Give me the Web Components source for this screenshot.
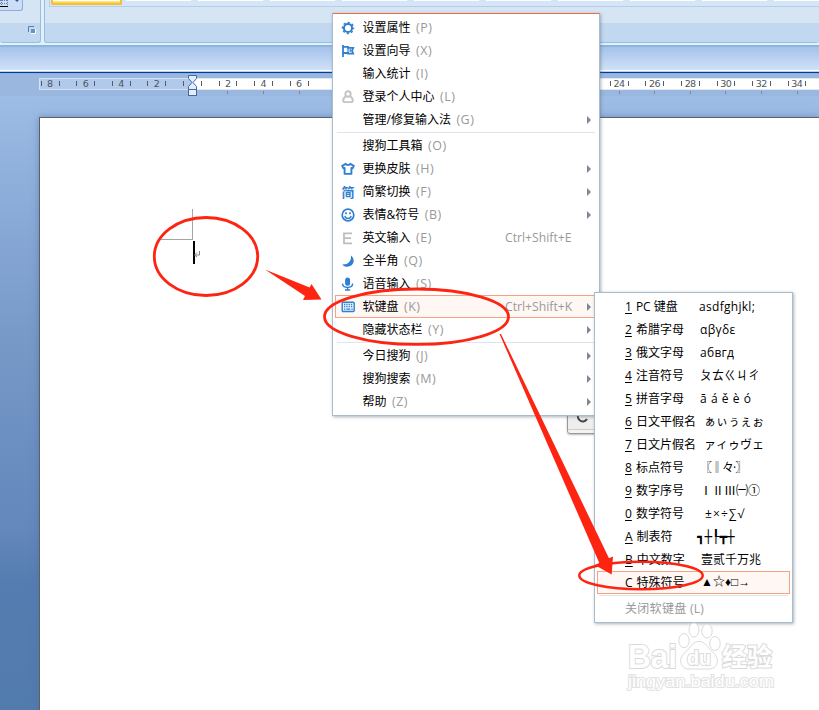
<!DOCTYPE html>
<html lang="zh-CN">
<head>
<meta charset="utf-8">
<title>文档</title>
<style>
html, body { margin: 0; height: 100%; }
body {
    position: relative;
    width: 819px;
    height: 710px;
    overflow: hidden;
    font: 12px/23px "Open Sans", "Noto Sans CJK SC", sans-serif;
    color: #000;
}
word-window { width: 819px; height: 710px; }
ime-bar { position: absolute; left: 567px; top: 396px; }
#main { position: absolute; left: 332px; top: 13px; }
#keys { position: absolute; left: 594px; top: 292px; }
site-mark { position: absolute; left: 624px; top: 620px; }
mark-layer { position: absolute; left: 0; top: 0; }

/* samples that come from other fonts than the labels */
.wide { --sample-spacing: .3px; }
.pinyin { --sample-spacing: .55px; }
.marks { --sample-spacing: -1px; }
.maths { --sample-spacing: 1.1px; }
.boxes { --sample-font: 12.5px/21px "DejaVu Sans Mono", monospace; }
.shapes { --sample-font: 12px/21px "Liberation Sans", "Noto Sans CJK SC", sans-serif; }
</style>
</head>
<body>
<word-window>
    <word-ribbon></word-ribbon>
    <word-ruler></word-ruler>
    <word-page></word-page>
</word-window>

<ime-bar></ime-bar>

<popup-menu id="main" class="top">
    <menu-item icon="gear" hotkey="(P)">设置属性</menu-item>
    <menu-item icon="flag" hotkey="(X)">设置向导</menu-item>
    <menu-item hotkey="(I)">输入统计</menu-item>
    <menu-item icon="user" hotkey="(L)">登录个人中心</menu-item>
    <menu-item hotkey="(G)" more>管理/修复输入法</menu-item>
    <menu-line></menu-line>
    <menu-item hotkey="(O)">搜狗工具箱</menu-item>
    <menu-item icon="shirt" hotkey="(H)" more>更换皮肤</menu-item>
    <menu-item icon="jian" hotkey="(F)" more>简繁切换</menu-item>
    <menu-item icon="smile" hotkey="(B)" more>表情&amp;符号</menu-item>
    <menu-item icon="latin" hotkey="(E)" accel="Ctrl+Shift+E">英文输入</menu-item>
    <menu-item icon="moon" hotkey="(Q)">全半角</menu-item>
    <menu-item icon="mic" hotkey="(S)">语音输入</menu-item>
    <menu-item icon="keyboard" hotkey="(K)" accel="Ctrl+Shift+K" more class="active">软键盘</menu-item>
    <menu-item hotkey="(Y)" more>隐藏状态栏</menu-item>
    <menu-line></menu-line>
    <menu-item hotkey="(J)" more>今日搜狗</menu-item>
    <menu-item hotkey="(M)" more>搜狗搜索</menu-item>
    <menu-item hotkey="(Z)" more>帮助</menu-item>
</popup-menu>

<popup-menu id="keys">
    <key-item key="1" sample="asdfghjkl;" start="102" class="wide">PC 键盘</key-item>
    <key-item key="2" sample="αβγδε" start="103" class="wide">希腊字母</key-item>
    <key-item key="3" sample="абвгд" start="103" class="wide">俄文字母</key-item>
    <key-item key="4" sample="ㄆㄊㄍㄐㄔ" start="103">注音符号</key-item>
    <key-item key="5" sample="ā á ě è ó" start="103" class="pinyin">拼音字母</key-item>
    <key-item key="6" sample="ぁぃぅぇぉ" start="107">日文平假名</key-item>
    <key-item key="7" sample="ァィゥヴェ" start="107">日文片假名</key-item>
    <key-item key="8" sample="〖‖々·〗" start="103" class="marks">标点符号</key-item>
    <key-item key="9" sample="ⅠⅡⅢ㈠①" start="103">数字序号</key-item>
    <key-item key="0" sample="±×÷∑√" start="108" class="maths">数学符号</key-item>
    <key-item key="A" sample="┓┼┞┳┼" start="100" class="boxes">制表符</key-item>
    <key-item key="B" sample="壹贰千万兆" start="104">中文数字</key-item>
    <key-item key="C" sample="▲☆♦□→" start="104" class="active shapes">特殊符号</key-item>
    <menu-line></menu-line>
    <key-item class="off wide">关闭软键盘 (L)</key-item>
</popup-menu>

<site-mark></site-mark>
<mark-layer></mark-layer>

<script>
const ICONS = {
    gear: `<circle cx="7" cy="7" r="4.1" fill="none" stroke="#2f80d0" stroke-width="2"/>
        <circle cx="7" cy="7" r="5.5" fill="none" stroke="#2f80d0" stroke-width="1.5" stroke-dasharray="2.2 2.12" stroke-dashoffset="1.1"/>`,
    flag: `<path d="M2 1v12" stroke="#2f80d0" stroke-width="1.8"/>
        <path d="M2 2.8h5v1h5.2L11 6.800l1.200 2.900H7V9H2" fill="none" stroke="#2f80d0" stroke-width="1.8"/><path d="M7 4v5M9.2 5v3" stroke="#2f80d0" stroke-width="1.2"/>`,
    user: `<circle cx="7" cy="4" r="2.7" fill="none" stroke="#c4c4c4" stroke-width="1.9"/>
        <path d="M4.6 6.6C2.6 7.6 2.200 9 2.200 10.400c0 1.300 1 1.700 2 1.700h5.600c1 0 2-.4 2-1.700 0-1.400-.4-2.800-2.400-3.800" fill="none" stroke="#c4c4c4" stroke-width="1.9"/>`,
    shirt: `<path d="M4.8 1.8C5.5 3.3 8.5 3.3 9.2 1.8l3.600 2-1.200 2.500-1.200-.4v6H3.600V5.900l-1.200.4L1.200 3.800z" fill="none" stroke="#2f80d0" stroke-width="1.9" stroke-linejoin="round"/>`,
    smile: `<circle cx="7" cy="7" r="5.8" fill="none" stroke="#2f80d0" stroke-width="1.7"/>
        <path d="M5 4.2v2M9 4.2v2" stroke="#2f80d0" stroke-width="1.7"/><path d="M3.8 8c.9 3.2 5.5 3.2 6.4 0" fill="none" stroke="#2f80d0" stroke-width="1.4"/>`,
    latin: `<path d="M11 2.3H3v10h8M3 7.2h7" fill="none" stroke="#bdbdbd" stroke-width="1.8"/>`,
    moon: `<path d="M10 1.5c4 3.3 3.4 8.6-.8 10.6-3 1.3-6.3.5-8-1.7C6.3 10.8 10.5 8 10 1.5z" fill="#2f80d0"/>`,
    mic: `<rect x="4.1" y=".5" width="5" height="8.3" rx="2.5" fill="#2f80d0"/>
        <path d="M1.5 6.5c.3 5.3 9.9 5.3 10.2 0M6.6 10.500v2.300M4 13h5.200" fill="none" stroke="#2f80d0" stroke-width="1.4"/>`,
    keyboard: `<rect x="1.2" y="2.2" width="12" height="9.3" rx="1" fill="#e8f2fc" stroke="#2f80d0" stroke-width="1.4"/>
        <path d="M3 4.5h9M3 6.7h9" stroke="#2f80d0" stroke-width="1.3" stroke-dasharray="1.3 1"/><path d="M3 9.2h1.3M5.3 9.2h4M10.4 9.2h1.3" stroke="#2f80d0" stroke-width="1.3"/>`
};

customElements.define('word-window', class extends HTMLElement {
    constructor() {
        super();
        this.attachShadow({mode: 'open'}).innerHTML = `<style>
            :host {
                display: flex; flex-direction: column;
                background: linear-gradient(#9ab8df 96px, #9dbde6 96px, #8cacd9 200px, #7598c7 350px, #6487bc 530px, #567db1 580px, #527bad);
            }
        </style><slot></slot>`;
    }
});

// Lower edge of the ribbon: the font group, the style gallery and the strip below them
customElements.define('word-ribbon', class extends HTMLElement {
    constructor() {
        super();
        this.attachShadow({mode: 'open'}).innerHTML = `<style>
            :host { display: block; overflow: hidden; }
            .groups { display: flex; gap: 3px; height: 43px; background: #dff0fc; }
            .group {
                box-sizing: border-box; height: 43px; border: solid #9bbbe0; border-width: 0 1px 1px;
                border-radius: 0 0 3px 3px; background: linear-gradient(#d6e5f3 23px, #c1d8f0 23px);
            }
            .font { display: flex; flex: none; justify-content: space-between; width: 41px; border-left: 0; }
            .button {
                box-sizing: border-box; width: 23px; height: 11px; border: 1px solid #8eace0;
                border-width: 0 1px 1px 0; border-radius: 0 0 3px 0; background: #cbddf7;
            }
            .launcher { margin: 26px 4px 0 0; }
            svg { display: block; }
            .styles { flex: 1; min-width: 0; padding-left: 4px; border-right: 0; }
            .gallery {
                display: flex; gap: 7px; box-sizing: border-box; height: 7px; padding-left: 1px; overflow: hidden;
                border: solid #b6cdec; border-width: 0 0 1px 1px; background: #d4e6f8;
            }
            .gallery i { flex: none; width: 65px; height: 1px; background: #fff; }
            .gallery .on {
                box-sizing: border-box; width: 71px; height: 5px; margin-right: -3px;
                border: 2px solid #f5c034; border-top: 0; border-radius: 0 0 2px 2px;
                background: linear-gradient(#fff 1px, #ffe680 1px, #fdd550);
            }
            .edge { height: 4px; background: linear-gradient(#d6f6fc 2px, #8fb0d8 2px, #97b5dc); }
            .strip { height: 23px; background: linear-gradient(#a4c2ea, #d0e1f8); }
            .line { height: 4px; background: linear-gradient(#fff 1px, #b8cee9 1px 2px, #003b9c 2px 3px, #8eb0dd 3px); }
        </style>
        <div class="groups">
            <div class="group font">
                <div class="button"><svg width="22" height="10"><path d="M0 .5h8M0 3.5h8M1.5 0v6M7.5 0v6" stroke="#667fa8" stroke-dasharray="1 1"/><path d="M0 6.5h8" stroke="#000"/><path d="M15 0h4l-2 2z" fill="#375b91"/></svg></div>
                <svg class="launcher" width="8" height="9"><path d="M.5 6V.5H6" fill="none" stroke="#557eac"/><path d="M3 3h4v4H3z" fill="#6b91bd"/><path d="M3 7.500h4.500V3" stroke="#fff" fill="none"/></svg>
            </div>
            <div class="group styles"><div class="gallery"><i class="on"></i>${'<i></i>'.repeat(10)}</div></div>
        </div>
        <div class="edge"></div>
        <div class="strip"></div>
        <div class="line"></div>`;
    }
});

customElements.define('word-ruler', class extends HTMLElement {
    constructor() {
        super();
        this.attachShadow({mode: 'open'}).innerHTML = `<style>
            :host { display: block; height: 43px; }
            svg { display: block; }
            text { font: 9.5px "DejaVu Sans", sans-serif; letter-spacing: -.6px; fill: #4d5560; text-anchor: middle; }
        </style>
        <svg width="819" height="43">${this.draw()}</svg>`;
    }

    draw() {
        const zero = 192.4;
        const step = 35.57;
        let out = `<rect x="39" y="4" width="154" height="12" fill="#d3e2f5"/>
            <rect x="40" y="5" width="153" height="10" fill="#b1c9ea"/>
            <rect x="193" y="4" width="626" height="12" fill="#dfe8f4"/>
            <rect x="193" y="5" width="626" height="10" fill="#fff"/>`;
        for (let i = -4; i <= 17; i++) {
            // the open menu lies over this part
            if (i > 3 && i < 12) continue;
            const x = zero + i * step;
            if (i) out += `<text x="${x - .3}" y="13.2">${Math.abs(i * 2)}</text>`;
            if (i > 0) out += `<path d="M${Math.floor(x) + .5} 17v3" stroke="#7c8797"/>`;
            for (const dx of [-8.9, 8.9]) {
                out += `<path d="M${Math.floor(x + dx) + .5} 7v5" stroke="#555c66"/>`;
            }
        }
        // indent handles
        out += `<path d="M188.5 1.5h8v3l-3.5 4 3.5 4v3h-8v-3l3.5-4-3.5-4z" fill="#e5edf8" stroke="#4169a8"/>
            <rect x="188.5" y="15.5" width="8" height="6" fill="#e5edf8" stroke="#4169a8"/>`;
        return out;
    }
});

customElements.define('word-page', class extends HTMLElement {
    constructor() {
        super();
        this.attachShadow({mode: 'open'}).innerHTML = `<style>
            :host {
                flex: 1; margin-left: 39px; border: solid #5d5f6a; border-width: 1px 0 0 1px;
                background: #fff; box-shadow: 0 0 7px #4d709e99;
            }
            svg { display: block; }
        </style>
        <svg width="300" height="200"><path d="M152.5 91v31M121 121.5h32" stroke="#a5a5a5"/><path d="M154 123v23" stroke="#000" stroke-width="2"/>
            <path d="M159.5 133v4h-5M157 134.5l-2.5 2.5 2.5 2" fill="none" stroke="#777" stroke-width=".9"/></svg>`;
    }
});

customElements.define('ime-bar', class extends HTMLElement {
    constructor() {
        super();
        this.attachShadow({mode: 'open'}).innerHTML = `<style>
            :host {
                display: block; box-sizing: border-box; width: 120px; height: 38px; border: 1px solid #999;
                border-radius: 3px; background: linear-gradient(#eee 32px, #ccc 32px 33px, #f3f3f3 33px);
                box-shadow: 0 1px 2px #0004;
            }
            svg { display: block; }
        </style>
        <svg width="40" height="30"><path d="M19 16a5 5.500 0 1 0 0 6" fill="none" stroke="#444" stroke-width="2"/></svg>`;
    }
});

customElements.define('popup-menu', class extends HTMLElement {
    constructor() {
        super();
        this.attachShadow({mode: 'open'}).innerHTML = `<style>
            :host {
                display: flex; flex-direction: column; box-sizing: border-box; width: 199px; padding: 2px;
                border: 1px solid #a9bccd; background: #fff; box-shadow: 1px 1px 3px #5a6a7a80;
            }
            :host(.top) { width: 268px; border-top-color: #ef6d3d; }
        </style><slot></slot>`;
    }
});

customElements.define('menu-line', class extends HTMLElement {
    constructor() {
        super();
        this.attachShadow({mode: 'open'}).innerHTML = `<style>
            :host { display: block; height: 1px; margin: 1px 2px; background: #e0e4ea; }
        </style>`;
    }
});

customElements.define('menu-item', class extends HTMLElement {
    constructor() {
        super();
        const icon = this.getAttribute('icon');
        const accel = this.getAttribute('accel');
        this.attachShadow({mode: 'open'}).innerHTML = `<style>
            :host {
                display: flex; align-items: center; box-sizing: border-box; height: 23px;
                padding: 0 5px 0 5px; border: 1px solid transparent; white-space: nowrap;
            }
            :host(.active) { border-color: #f4a27f; background: #fff7f3; }
            .icon { display: grid; place-items: center; width: 14px; height: 14px; margin-right: 7.5px; }
            svg { display: block; }
            .jian { font: 700 13px/12px "Noto Sans CJK SC", sans-serif; color: #2f80d0; }
            .hotkey { margin-left: 5.5px; font-size: 12.5px; letter-spacing: .5px; color: #999; }
            .accel { width: 82px; margin-left: auto; font-size: 12.2px; color: #999; }
            .arrow { width: 4px; margin-left: auto; }
            .accel + .arrow { margin-left: 0; }
            .accel:last-child { margin-right: 4px; }
        </style>
        <span class="icon">${icon === 'jian' ? '<span class="jian">简</span>' : icon ? `<svg width="14" height="14">${ICONS[icon]}</svg>` : ''}</span>
        <slot></slot>
        <span class="hotkey">${this.getAttribute('hotkey')}</span>
        ${accel ? `<span class="accel">${accel}</span>` : ''}
        ${this.hasAttribute('more') ? '<svg class="arrow" width="4" height="8"><path d="M0 0l4 4-4 4z" fill="#7d8894"/></svg>' : ''}`;
    }
});

/**
 * Row of the soft keyboard menu: key, layout name and a sample of its characters.
 * The start attribute is where the sample begins, from the row's left edge.
 */
customElements.define('key-item', class extends HTMLElement {
    constructor() {
        super();
        const key = this.getAttribute('key');
        this.attachShadow({mode: 'open'}).innerHTML = `<style>
            :host {
                display: flex; box-sizing: border-box; height: 23px; line-height: 21px;
                padding-left: 27px; border: 1px solid transparent; white-space: nowrap;
            }
            :host(.active) { border-color: #f4a27f; background: #fff7f3; }
            :host(.off) { color: #999; }
            .label { flex: none; width: ${(this.getAttribute('start') || 120) - 28}px; }
            :host(.off) .label { letter-spacing: .3px; }
            u { display: inline-block; margin-right: 4px; text-underline-offset: 2px; }
            :host(.active) u { text-decoration: none; }
            .sample { font: var(--sample-font, inherit); letter-spacing: var(--sample-spacing, 0); }
        </style>
        <span class="label">${key ? `<u>${key}</u>` : ''}<slot></slot></span>
        <span class="sample">${this.getAttribute('sample') || ''}</span>`;
    }
});

customElements.define('site-mark', class extends HTMLElement {
    constructor() {
        super();
        this.attachShadow({mode: 'open'}).innerHTML = `<style>
            :host { display: block; }
            svg { display: block; fill: #fff; stroke: #dadada; stroke-width: 1; }
            text { font-family: "Liberation Sans", "Noto Sans CJK SC", sans-serif; font-weight: bold; paint-order: stroke; stroke-width: 2px; }
            .url { font-weight: 400; stroke: #e2e2e2; stroke-width: 2px; }
        </style>
        <svg width="160" height="76">
            <text x="4" y="48" font-size="33" textLength="49" lengthAdjust="spacingAndGlyphs">Bai</text>
            <ellipse cx="70" cy="10" rx="5" ry="7"/><ellipse cx="83" cy="11" rx="5.2" ry="7"/>
            <ellipse cx="60" cy="20.700" rx="5.2" ry="7"/><ellipse cx="91" cy="23.500" rx="5.2" ry="7"/>
            <path d="M75 21.500c7 0 8 6 14 11 8 7 4 16.500-4 16.500H65c-8 0-12-9.500-4-16.500 6-5 7-11 14-11z"/>
            <text x="63" y="45" font-size="20" textLength="24" lengthAdjust="spacingAndGlyphs">du</text>
            <text x="98" y="46" font-size="25" textLength="50">经验</text>
            <text class="url" x="4" y="67" font-size="17" textLength="146" lengthAdjust="spacingAndGlyphs">jingyan.baidu.com</text>
        </svg>`;
    }
});

// Red circles and arrows over everything
customElements.define('mark-layer', class extends HTMLElement {
    constructor() {
        super();
        this.attachShadow({mode: 'open'}).innerHTML = `<style>
            :host { display: block; pointer-events: none; }
            svg { display: block; }
        </style>
        <svg width="819" height="710">
            <g fill="none" stroke="#fd2412" stroke-width="2.8">
                <ellipse cx="206" cy="256.5" rx="51.7" ry="39"/>
                <ellipse cx="416.5" cy="316.7" rx="92" ry="27.7"/>
                <ellipse cx="641" cy="575.5" rx="61.7" ry="13.8" stroke-width="2.5"/>
            </g>
            <g fill="#fd2412">
                <path d="M265 269.5L309.6 287.5 311.5 284 321.5 299.5 303 300 305 296z"/>
                <path d="M499.500 334h1.500L609 558.300 613 556.500 611.700 574.500 594.700 565 599.300 563z"/>
            </g>
        </svg>`;
    }
});
</script>
</body>
</html>
